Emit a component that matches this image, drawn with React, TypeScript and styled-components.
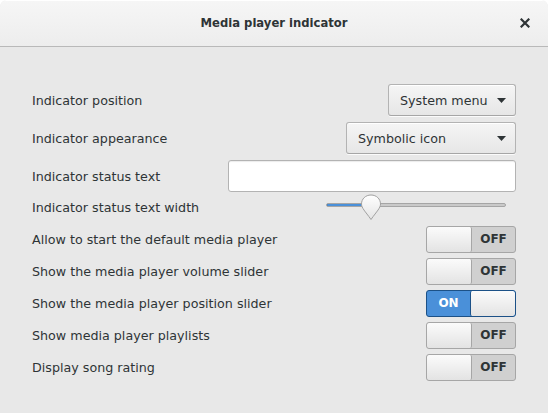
import {useState} from 'react';
import styled, {createGlobalStyle} from 'styled-components';

const GlobalStyle = createGlobalStyle`
  html, body {
    margin: 0;
    padding: 0;
    background: #ffffff;
  }
  body {
    font-family: "DejaVu Sans", "Liberation Sans", sans-serif;
    font-size: 12.7px;
    color: #2e3436;
  }
`;

interface SwitchItem {
  label: string;
  on: boolean;
}

const switchItems: SwitchItem[] = [
  {label: 'Allow to start the default media player', on: false},
  {label: 'Show the media player volume slider', on: false},
  {label: 'Show the media player position slider', on: true},
  {label: 'Show media player playlists', on: false},
  {label: 'Display song rating', on: false},
];

const ArrowDown = () => (
  <svg width="9" height="5" viewBox="0 0 9 5">
    <path d="M0 0 L9 0 L4.5 5 Z" fill="#2e3436" />
  </svg>
);

const CloseIcon = () => (
  <svg width="10" height="10" viewBox="0 0 10 10">
    <path
      d="M1.5 1.5 L8.5 8.5 M8.5 1.5 L1.5 8.5"
      stroke="#2e3436"
      strokeWidth="2.2"
      strokeLinecap="square"
    />
  </svg>
);

const Knob = () => (
  <svg width="22" height="27" viewBox="0 0 22 27">
    <defs>
      <linearGradient id="knobFill" x1="0" y1="0" x2="0" y2="1">
        <stop offset="0" stopColor="#ffffff" />
        <stop offset="1" stopColor="#e4e4e4" />
      </linearGradient>
    </defs>
    <path
      d="M11 1 C16.5 1 20.5 5 20.5 10 C20.5 14 17 17 11 25.5 C5 17 1.5 14 1.5 10 C1.5 5 5.5 1 11 1 Z"
      fill="url(#knobFill)"
      stroke="#a1a1a1"
      strokeWidth="1"
    />
  </svg>
);

const Dropdown = ({value, width}: {value: string; width: number}) => (
  <DropButton $width={width}>
    <span>{value}</span>
    <ArrowDown />
  </DropButton>
);

const Toggle = ({on}: {on: boolean}) => (
  <SwitchBox $on={on}>
    {on ? (
      <>
        <SwitchLabel $on>ON</SwitchLabel>
        <SwitchKnob $on />
      </>
    ) : (
      <>
        <SwitchKnob $on={false} />
        <SwitchLabel $on={false}>OFF</SwitchLabel>
      </>
    )}
  </SwitchBox>
);

const App = () => {
  const [width] = useState<number>(0.25);
  return (
    <>
      <GlobalStyle />
      <Window>
        <TitleBar>
          <Title>Media player indicator</Title>
          <CloseButton>
            <CloseIcon />
          </CloseButton>
        </TitleBar>
        <Content>
          <Row $height={38}>
            <Label>Indicator position</Label>
            <Dropdown value="System menu" width={128} />
          </Row>
          <Row $height={38}>
            <Label>Indicator appearance</Label>
            <Dropdown value="Symbolic icon" width={170} />
          </Row>
          <Row $height={38}>
            <Label>Indicator status text</Label>
            <Entry />
          </Row>
          <Row $height={28}>
            <Label $raise={4}>Indicator status text width</Label>
            <Slider>
              <Trough>
                <TroughFill style={{width: `${width * 100}%`}} />
              </Trough>
              <KnobHolder style={{left: `${width * 100}%`}}>
                <Knob />
              </KnobHolder>
            </Slider>
          </Row>
          {switchItems.map((item) => (
            <Row key={item.label} $height={32}>
              <Label>{item.label}</Label>
              <Toggle on={item.on} />
            </Row>
          ))}
        </Content>
      </Window>
    </>
  );
};

const Window = styled.div`
  width: 548px;
  height: 413px;
  background: #e8e8e8;
  border-radius: 7px 7px 0 0;
  overflow: hidden;
`;

const TitleBar = styled.div`
  height: 46px;
  position: relative;
  display: flex;
  align-items: center;
  justify-content: center;
  background: linear-gradient(to bottom, #f6f6f6, #ededed);
  border-bottom: 1px solid #b9b9b9;
  box-shadow: inset 0 1px 0 #ffffff;
`;

const Title = styled.div`
  font-weight: bold;
  font-size: 11.6px;
  color: #2e3436;
`;

const CloseButton = styled.div`
  position: absolute;
  right: 18px;
  top: 18px;
  width: 10px;
  height: 10px;
  display: flex;
`;

const Content = styled.div`
  display: flex;
  flex-direction: column;
  padding: 34px 32px 0 32px;
`;

const Row = styled.div<{$height: number}>`
  height: ${(p) => p.$height}px;
  display: flex;
  align-items: center;
  justify-content: space-between;
`;

const Label = styled.div<{$raise?: number}>`
  white-space: nowrap;
  margin-bottom: ${(p) => p.$raise ?? 0}px;
`;

const DropButton = styled.div<{$width: number}>`
  box-sizing: border-box;
  width: ${(p) => p.$width}px;
  height: 32px;
  display: flex;
  align-items: center;
  justify-content: space-between;
  padding: 0 9px 0 11px;
  border: 1px solid #b3b3b3;
  border-bottom-color: #a6a6a6;
  border-radius: 3px;
  background: linear-gradient(to bottom, #f5f5f5, #e6e6e6);
  box-shadow: inset 0 1px 0 #ffffff, 0 1px 0 rgba(255, 255, 255, 0.8);
`;

const Entry = styled.div`
  box-sizing: border-box;
  width: 288px;
  height: 32px;
  background: #ffffff;
  border: 1px solid #b3b3b3;
  border-radius: 3px;
  box-shadow: inset 0 2px 1px -1px rgba(0, 0, 0, 0.08);
`;

const Slider = styled.div`
  position: relative;
  width: 180px;
  height: 24px;
  margin-right: 10px;
  display: flex;
  align-items: center;
`;

const Trough = styled.div`
  position: relative;
  box-sizing: border-box;
  width: 100%;
  height: 4px;
  margin-top: -8px;
  border: 1px solid #a5a5a5;
  border-radius: 2px;
  background: #c9c9c9;
  overflow: hidden;
`;

const TroughFill = styled.div`
  position: absolute;
  left: -1px;
  top: -1px;
  height: 4px;
  background: #4a90d9;
  border: 1px solid #184472;
  box-sizing: border-box;
  border-radius: 2px;
`;

const KnobHolder = styled.div`
  position: absolute;
  top: -3px;
  margin-left: -11px;
  width: 22px;
  height: 27px;
`;

const SwitchBox = styled.div<{$on: boolean}>`
  box-sizing: border-box;
  width: 90px;
  height: 27px;
  display: flex;
  border: 1px solid ${(p) => (p.$on ? '#1c5187' : '#a6a6a6')};
  border-radius: 3px;
  background: ${(p) => (p.$on ? '#4a90d9' : '#d0d0d0')};
  overflow: hidden;
`;

const SwitchLabel = styled.div<{$on: boolean}>`
  flex: 1;
  display: flex;
  align-items: center;
  justify-content: center;
  font-weight: bold;
  font-size: 12px;
  color: ${(p) => (p.$on ? '#ffffff' : '#2e3436')};
`;

const SwitchKnob = styled.div<{$on: boolean}>`
  box-sizing: border-box;
  width: 45px;
  height: 100%;
  border-radius: 2px;
  background: linear-gradient(to bottom, #fbfbfb, #e3e3e3);
  ${(p) =>
    p.$on
      ? 'border-left: 1px solid #1c5187;'
      : 'border-right: 1px solid #a6a6a6;'}
`;

export default App;
